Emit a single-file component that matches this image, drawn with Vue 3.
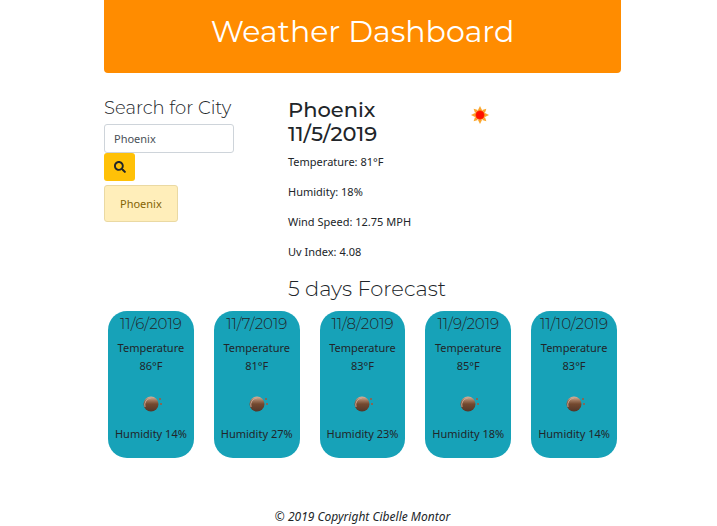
<script setup>
import { ref } from 'vue'

const city = ref('Phoenix')
const history = ['Phoenix']
const details = ['Temperature: 81°F', 'Humidity: 18%', 'Wind Speed: 12.75 MPH', 'Uv Index: 4.08']
const forecast = [
  { date: '11/6/2019', temp: 86, humidity: 14 },
  { date: '11/7/2019', temp: 81, humidity: 27 },
  { date: '11/8/2019', temp: 83, humidity: 23 },
  { date: '11/9/2019', temp: 85, humidity: 18 },
  { date: '11/10/2019', temp: 83, humidity: 14 },
]
</script>

<template>
  <div class="page">
    <header class="banner"><h1>Weather Dashboard</h1></header>

    <main>
      <div class="columns">
        <form class="search" @submit.prevent>
          <label for="city">Search for City</label>
          <input id="city" v-model="city" type="text" />
          <button class="go" type="submit" aria-label="Search">
            <svg viewBox="0 0 512 512" width="12" height="12" aria-hidden="true">
              <path fill="currentColor" d="M505 442.700L405.300 343c-4.500-4.500-10.600-7-17-7H372c27.600-35.300 44-79.700 44-128C416 93.100 322.900 0 208 0S0 93.100 0 208s93.100 208 208 208c48.300 0 92.700-16.400 128-44v16.300c0 6.400 2.500 12.500 7 17l99.700 99.700c9.400 9.400 24.600 9.400 33.900 0l28.300-28.300c9.400-9.400 9.400-24.600.1-34zM208 336c-70.700 0-128-57.200-128-128 0-70.700 57.200-128 128-128 70.700 0 128 57.200 128 128 0 70.700-57.200 128-128 128z" />
            </svg>
          </button>
          <button v-for="name in history" :key="name" class="past" type="button">{{ name }}</button>
        </form>

        <section class="current">
          <div class="summary">
            <h2><span>Phoenix</span><span>11/5/2019</span></h2>
            <svg class="sun" viewBox="0 0 18 18" width="18" height="18" aria-hidden="true">
              <g fill="#fba62c">
                <path d="M9 0l2 4H7z" />
                <path d="M9 0l2 4H7z" transform="rotate(45 9 9)" />
                <path d="M9 0l2 4H7z" transform="rotate(90 9 9)" />
                <path d="M9 0l2 4H7z" transform="rotate(135 9 9)" />
                <path d="M9 0l2 4H7z" transform="rotate(180 9 9)" />
                <path d="M9 0l2 4H7z" transform="rotate(225 9 9)" />
                <path d="M9 0l2 4H7z" transform="rotate(270 9 9)" />
                <path d="M9 0l2 4H7z" transform="rotate(315 9 9)" />
              </g>
              <circle cx="9" cy="9" r="5" fill="#ff6a00" />
              <circle cx="9" cy="9" r="4" fill="#ff1000" />
            </svg>
          </div>
          <p v-for="line in details" :key="line">{{ line }}</p>
          <h3>5 days Forecast</h3>
        </section>
      </div>

      <section class="cards">
        <article v-for="day in forecast" :key="day.date" class="card">
          <h4>{{ day.date }}</h4>
          <p>Temperature<br />{{ day.temp }}°F</p>
          <svg class="moon" viewBox="-3 0 22 16" width="22" height="16" aria-hidden="true">
            <defs>
              <linearGradient id="bronze" x1="0" y1="0" x2="0" y2="1">
                <stop offset="0" stop-color="#d9b39a" />
                <stop offset="0.3" stop-color="#986f55" />
                <stop offset="0.5" stop-color="#74492f" />
                <stop offset="1" stop-color="#523629" />
              </linearGradient>
            </defs>
            <circle cx="8" cy="8" r="7.500" fill="url(#bronze)" />
            <path d="M2 11A7 7 0 0 1 8 2" fill="none" stroke="#c7a593" stroke-width="1" />
            <path d="M16 2h2v2h-2zM17 7h2v2h-2z" fill="#80695a" />
          </svg>
          <p>Humidity {{ day.humidity }}%</p>
        </article>
      </section>
    </main>

    <footer>© 2019 Copyright Cibelle Montor</footer>
  </div>
</template>

<style>
body {
  margin: 0;
  background: #fff;
}
</style>

<style scoped>
.page {
  padding: 0 96px 0 104px;
  color: #212529;
  font: 11px/18px "Segoe UI", "Noto Sans", "Open Sans", sans-serif;
}
h1, h2, h3, h4, label {
  margin: 0;
  font-family: Montserrat, Inter, sans-serif;
  font-weight: 300;
}
p {
  margin: 0 0 12px;
}
.banner {
  padding: 14px 0 23px;
  border-radius: 0 0 4px 4px;
  background: #ff8c00;
  color: #fff;
  text-align: center;
}
h1 {
  font-size: 30px;
  line-height: 36px;
  font-weight: 400;
}
.columns {
  display: grid;
  grid-template-columns: 130fr 333fr;
  column-gap: 54px;
  padding-top: 25px;
}
.search {
  display: flex;
  flex-direction: column;
  align-items: flex-start;
}
label {
  margin-bottom: 6px;
  font-size: 18px;
  line-height: 20px;
  white-space: nowrap;
}
input,
button {
  box-sizing: border-box;
  font: inherit;
  border-radius: 3px;
}
input {
  width: 100%;
  height: 29px;
  padding: 4px 9px;
  border: 1px solid #ced4da;
  background: #fff;
  color: #495057;
}
.go {
  display: flex;
  align-items: center;
  justify-content: center;
  width: 31px;
  height: 28px;
  padding: 0;
  border: 0;
  background: #ffc107;
  color: #212529;
}
.past {
  height: 37px;
  margin-top: 4px;
  padding: 0 15px;
  border: 1px solid #ead9a3;
  background: #ffeeba;
  color: #856404;
}
.summary {
  display: grid;
  grid-template-columns: 11fr 9fr;
  margin-bottom: 7px;
}
h2 {
  display: flex;
  flex-direction: column;
  font-size: 21px;
  line-height: 24px;
  font-weight: 500;
}
.sun {
  margin-top: 8px;
}
h3 {
  padding-top: 4px;
  font-size: 21px;
  line-height: 24px;
}
.cards {
  display: grid;
  grid-template-columns: repeat(5, 1fr);
  gap: 20px;
  padding: 10px 4px 0;
}
.card {
  display: flex;
  flex-direction: column;
  align-items: center;
  padding: 4px 0 3px;
  border-radius: 19px;
  background: #17a2b8;
  text-align: center;
  white-space: nowrap;
}
h4 {
  margin-bottom: 6px;
  font-size: 15px;
  line-height: 18px;
}
.moon {
  margin: 9px 0 13px;
}
footer {
  padding-top: 50px;
  font-size: 12px;
  text-align: center;
  font-style: italic;
}
</style>
